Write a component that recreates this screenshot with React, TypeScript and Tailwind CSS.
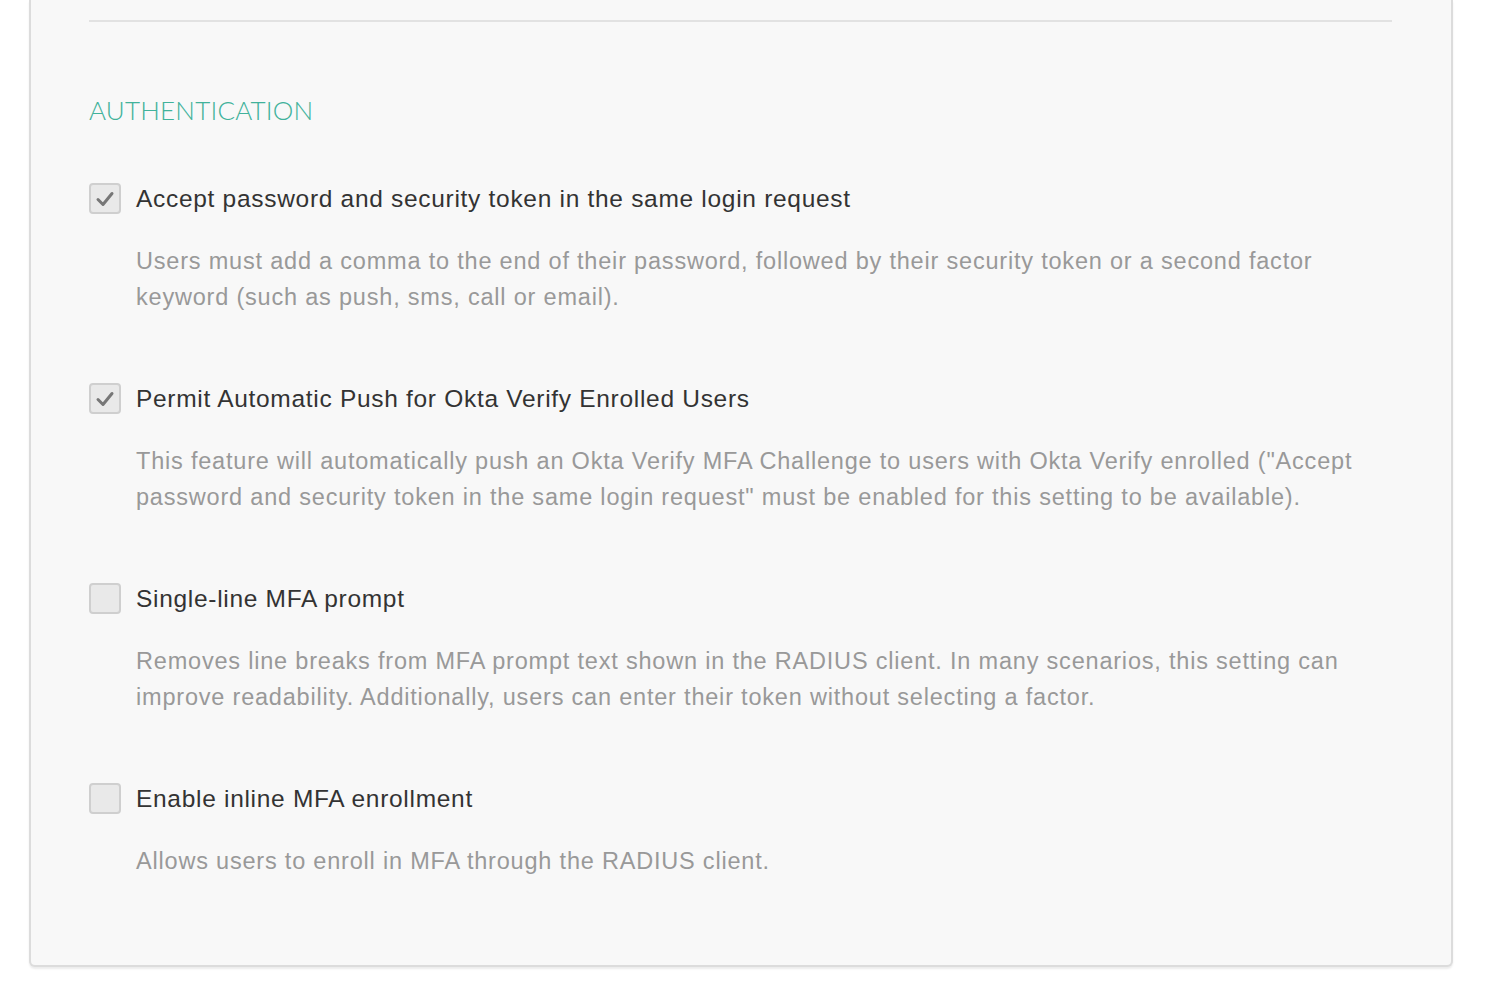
const ITEMS = [
  {
    label: "Accept password and security token in the same login request",
    checked: true,
    description:
      "Users must add a comma to the end of their password, followed by their security token or a second factor keyword (such as push, sms, call or email).",
  },
  {
    label: "Permit Automatic Push for Okta Verify Enrolled Users",
    checked: true,
    description:
      'This feature will automatically push an Okta Verify MFA Challenge to users with Okta Verify enrolled ("Accept password and security token in the same login request" must be enabled for this setting to be available).',
  },
  {
    label: "Single-line MFA prompt",
    checked: false,
    description:
      "Removes line breaks from MFA prompt text shown in the RADIUS client. In many scenarios, this setting can improve readability. Additionally, users can enter their token without selecting a factor.",
  },
  {
    label: "Enable inline MFA enrollment",
    checked: false,
    description: "Allows users to enroll in MFA through the RADIUS client.",
  },
];

function Checkbox({ checked }: { checked: boolean }) {
  return (
    <span className="flex h-[31px] w-[32px] shrink-0 items-center justify-center rounded-[4px] border-2 border-[#cfcfcf] bg-[#e9e9e9]">
      {checked && (
        <svg width="20" height="18" viewBox="0 0 20 18" fill="none">
          <path d="M3 9.5 L8 14.5 L17 3.5" stroke="#777" strokeWidth="3" strokeLinecap="round" strokeLinejoin="round" />
        </svg>
      )}
    </span>
  );
}

export default function App() {
  return (
    <div className="min-h-[1001px] bg-white pl-[29px] pr-[35px] pb-[35px]" style={{ fontFamily: "'Liberation Sans', Arial, sans-serif" }}>
      <div className="rounded-b-[6px] border-x-2 border-b-2 border-[#dcdcdc] bg-[#f8f8f8] pl-[58px] pr-[59px] pb-[86px] pt-[20px] shadow-[0_2px_2px_rgba(0,0,0,0.08)]">
        <div className="h-[2px] bg-[#e2e2e2]" />
        <h3
          className="mt-[72px] text-[26px] font-light leading-[32px] tracking-[0.2px] text-[#41b29b]"
          style={{ fontFamily: "Lato, 'Liberation Sans', sans-serif" }}
        >
          AUTHENTICATION
        </h3>
        <div className="mt-[57px] flex flex-col gap-[68px]">
          {ITEMS.map((item, idx) => (
            <div key={idx}>
              <label className="flex items-center gap-[15px]">
                <Checkbox checked={item.checked} />
                <span className="text-[24.5px] leading-[31px] tracking-[0.7px] text-[#333]">{item.label}</span>
              </label>
              <p className="mt-[29px] pl-[47px] pr-[20px] text-[23.5px] leading-[36px] tracking-[0.8px] text-[#999]">
                {item.description}
              </p>
            </div>
          ))}
        </div>
      </div>
    </div>
  );
}
